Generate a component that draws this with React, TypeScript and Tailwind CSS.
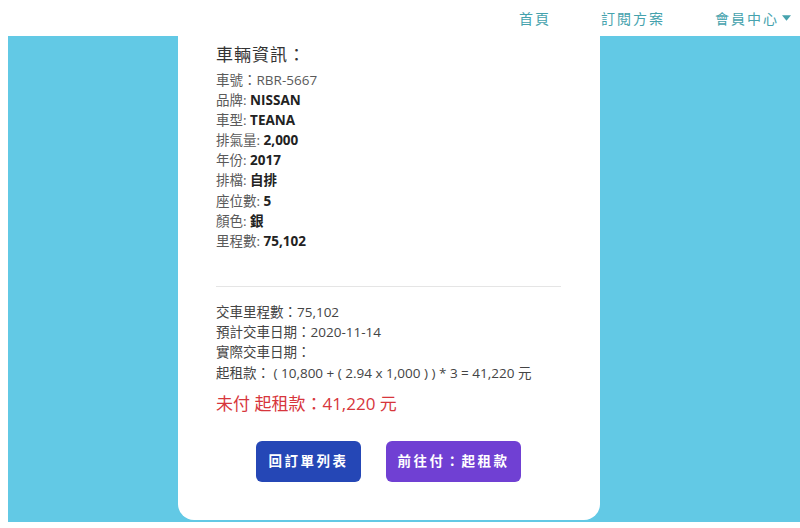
export default function App() {
    const info: [string, string][] = [
        ["品牌", "NISSAN"],
        ["車型", "TEANA"],
        ["排氣量", "2,000"],
        ["年份", "2017"],
        ["排檔", "自排"],
        ["座位數", "5"],
        ["顏色", "銀"],
        ["里程數", "75,102"],
    ];

    return (
        <div
            className="w-[800px] h-[528px] bg-white overflow-hidden flex flex-col"
            style={{ fontFamily: '"Open Sans", "Noto Sans CJK TC", sans-serif' }}
        >
            {/* Top nav */}
            <header className="h-[36px] shrink-0 flex items-center justify-end pr-[9px] text-[14px] tracking-[2px] text-[#45a2ad]">
                <a className="mr-[50px] ml-[-2px]">首頁</a>
                <a className="mr-[50px]">訂閱方案</a>
                <a className="flex items-center">
                    會員中心
                    <svg width="9" height="6" viewBox="0 0 10 6" className="ml-[3px]">
                        <path d="M0 0h10L5 6z" fill="#45a2ad" />
                    </svg>
                </a>
            </header>

            {/* Blue stage */}
            <div className="ml-[8px] h-[486px] bg-[#62c9e5] flex pl-[170px]">
                <div className="w-[422px] h-[484px] bg-white rounded-b-[16px] pt-[6px] px-[38px] text-[#5a5a5a]">
                    <h2 className="text-[17px] leading-[26px] text-[#333] tracking-[1px]">車輛資訊：</h2>
                    <div className="mt-[2px] text-[13.5px] leading-[20.1px]">
                        <p>車號：RBR-5667</p>
                        {info.map(([k, v]) => (
                            <p key={k}>
                                {k}: <span className="font-bold text-[#222]">{v}</span>
                            </p>
                        ))}
                    </div>

                    <div className="mt-[35px] border-t border-[#e5e5e5] mr-[1px]" />

                    <div className="mt-[15px] text-[13.5px] leading-[20.3px] text-[#444]">
                        <p>交車里程數：75,102</p>
                        <p>預計交車日期：2020-11-14</p>
                        <p>實際交車日期：</p>
                        <p>起租款： ( 10,800 + ( 2.94 x 1,000 ) ) * 3 = 41,220 元</p>
                    </div>

                    <p className="mt-[9px] text-[17px] leading-[24px] text-[#d7363c]">
                        未付 起租款：41,220 元
                    </p>

                    <div className="mt-[25px] flex justify-center gap-[25px] ml-[-1px]">
                        <button className="w-[105px] h-[41px] rounded-[6px] bg-[#2547b6] text-white text-[13.5px] font-bold tracking-[2.5px]">
                            回訂單列表
                        </button>
                        <button className="w-[135px] h-[41px] rounded-[6px] bg-[#7040d3] text-white text-[13.5px] font-bold tracking-[2.5px]">
                            前往付：起租款
                        </button>
                    </div>
                </div>
            </div>
        </div>
    );
}
